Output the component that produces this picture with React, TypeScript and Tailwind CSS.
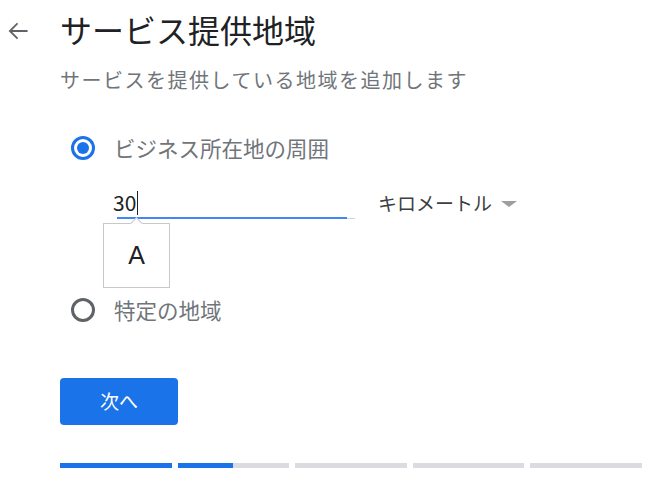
import React from "react";

const font = { fontFamily: '"Noto Sans CJK JP", "Noto Sans", sans-serif' };

function Radio({ checked }: { checked: boolean }) {
  return checked ? (
    <div className="w-[24px] h-[24px] rounded-full border-[3px] border-[#1a73e8] flex items-center justify-center">
      <div className="w-[12px] h-[12px] rounded-full bg-[#1a73e8]" />
    </div>
  ) : (
    <div className="w-[24px] h-[24px] rounded-full border-[3px] border-[#5f6368]" />
  );
}

export default function App() {
  const segs = [
    { blue: 100 },
    { blue: 50 },
    { blue: 0 },
    { blue: 0 },
    { blue: 0 },
  ];
  return (
    <div className="w-[654px] h-[492px] bg-white relative overflow-hidden" style={font}>
      {/* header */}
      <div className="flex items-center h-[58px]">
        <div className="w-[60px] flex items-center pl-[5px] pt-[4px]">
          <svg width="26" height="26" viewBox="0 0 24 24" fill="none">
            <path d="M20 12H5M11 5.5L4.5 12l6.5 6.5" stroke="#5f6368" strokeWidth="1.7" strokeLinecap="square" />
          </svg>
        </div>
        <div className="text-[32px] leading-[32px] text-[#202124]">サービス提供地域</div>
      </div>
      <div className="pl-[60px] mt-[12px] text-[20px] leading-[20px] tracking-[1.5px] text-[#70757a]">
        サービスを提供している地域を追加します
      </div>
      {/* radio 1 */}
      <div className="mt-[38px] h-[40px] flex items-center pl-[71px]">
        <Radio checked />
        <div className="ml-[19px] text-[21.5px] leading-[22px] text-[#70757a]">ビジネス所在地の周囲</div>
      </div>
      {/* input row */}
      <div className="mt-[20px] h-[40px] flex items-start pl-[113px]">
        <div className="relative w-[240px] h-[40px]">
          <div className="flex items-center h-[30px] text-[21px] text-[#202124]">
            <span>30</span>
            <span className="ml-[1px] w-[1px] h-[24px] bg-[#202124]" />
          </div>
          <div className="absolute left-[4px] top-[29px] w-[230px] h-[2px] bg-[#4285f4]" />
          <div className="absolute left-[234px] top-[30px] w-[8px] h-[1px] bg-[#c7d3e8]" />
        </div>
        <div className="ml-[25px] h-[30px] flex items-center text-[19px] text-[#3c4043]">
          キロメートル
          <span className="ml-[9px] mt-[2px] w-0 h-0 border-l-[8px] border-r-[8px] border-t-[6px] border-l-transparent border-r-transparent border-t-[#9e9e9e]" />
        </div>
      </div>
      {/* tooltip */}
      <div className="absolute left-[103px] top-[223px] w-[67px] h-[65px] bg-white border border-[#c8c8c8] flex items-center justify-center text-[25px] text-[#202124]" style={{ fontFamily: '"Liberation Sans", Arial, sans-serif' }}>
        A
        <div className="absolute -top-[5px] left-[28px] w-[9px] h-[9px] bg-white border-l border-t border-[#c8c8c8] rotate-45" />
      </div>
      {/* radio 2 */}
      <div className="mt-[62px] h-[40px] flex items-center pl-[71px]">
        <Radio checked={false} />
        <div className="ml-[19px] text-[21.5px] leading-[22px] text-[#70757a]">特定の地域</div>
      </div>
      {/* button */}
      <div className="pl-[60px] mt-[48px]">
        <button className="w-[118px] h-[47px] rounded-[4px] bg-[#1a73e8] text-white text-[19px] flex items-center justify-center">
          次へ
        </button>
      </div>
      {/* progress */}
      <div className="pl-[60px] mt-[38px] flex gap-[6px] w-[642px]">
        {segs.map((s, i) => (
          <div key={i} className="flex-1 h-[5px] bg-[#dadce0] flex">
            <div className="h-full bg-[#1a73e8]" style={{ width: `${s.blue}%` }} />
          </div>
        ))}
      </div>
    </div>
  );
}
